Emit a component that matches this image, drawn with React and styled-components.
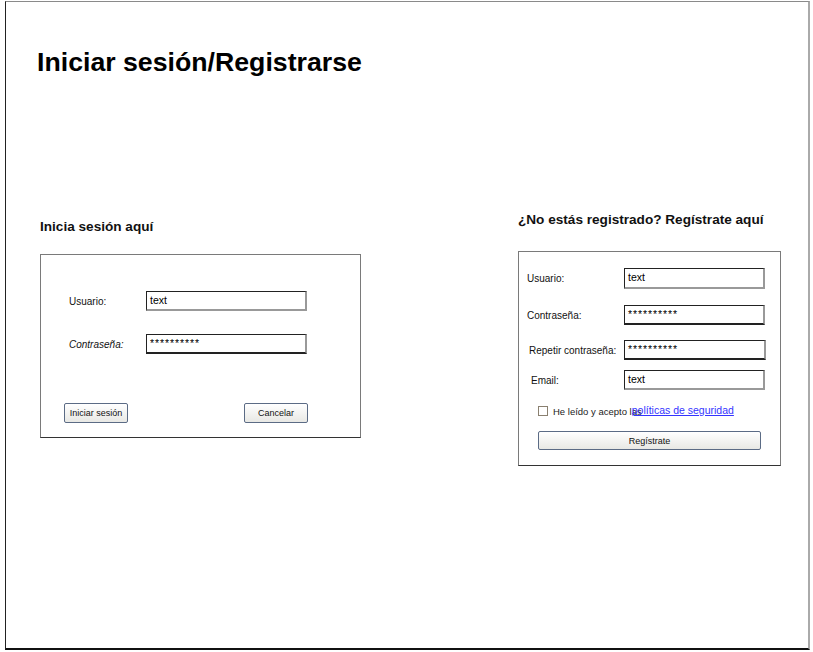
import React from "react";
import styled, { createGlobalStyle } from "styled-components";

const Global = createGlobalStyle`
  html, body { margin: 0; padding: 0; background: #fff; }
  body { font-family: "Liberation Sans", Arial, sans-serif; color: #111; }
`;

const Frame = styled.div`
  box-sizing: border-box;
  margin: 1px 0 0 5px;
  width: 805px;
  height: 649px;
  border-left: 1px solid #222;
  border-top: 1px solid #8a8a8a;
  border-right: 2px solid #aaa;
  border-bottom: 2px solid #111;
  padding: 45px 0 0 31px;
`;

const Title = styled.h1`
  margin: 0;
  font-size: 26.7px;
  line-height: 30px;
  font-weight: bold;
  color: #000;
`;

const Columns = styled.div`
  display: flex;
  align-items: flex-start;
  gap: 157px;
  margin-top: 135px;
  padding-left: 3px;
`;

const Column = styled.div`
  display: flex;
  flex-direction: column;
  margin-top: ${(p) => p.$top || 0}px;
`;

const Heading = styled.h2`
  margin: 0 0 ${(p) => p.$gap}px 0;
  font-size: 13.6px;
  line-height: 15px;
  font-weight: bold;
  color: #111;
  white-space: nowrap;
`;

const Panel = styled.div`
  box-sizing: border-box;
  width: ${(p) => p.$w}px;
  height: ${(p) => p.$h}px;
  border: 1px solid #7a7a7a;
  border-bottom-color: #333;
  padding: ${(p) => p.$pad};
  display: flex;
  flex-direction: column;
`;

const Row = styled.div`
  display: flex;
  align-items: center;
  margin-top: ${(p) => p.$mt || 0}px;
`;

const Label = styled.span`
  box-sizing: border-box;
  width: ${(p) => p.$w}px;
  padding-left: ${(p) => p.$indent || 0}px;
  font-size: 10px;
  color: #111;
  white-space: nowrap;
  ${(p) => (p.$italic ? "font-style: italic;" : "")}
`;

const Input = styled.div`
  box-sizing: border-box;
  width: ${(p) => p.$w}px;
  height: ${(p) => p.$h || 20}px;
  border-top: 1px solid #222;
  border-left: 1px solid #222;
  border-right: 2px solid #999;
  border-bottom: 2px solid ${(p) => (p.$dark ? "#222" : "#999")};
  padding: 0 3px;
  font-size: 10.5px;
  line-height: 17px;
  color: #000;
  background: #fff;
  letter-spacing: ${(p) => (p.$secret ? "0.9px" : "0")};
`;

const ButtonRow = styled.div`
  display: flex;
  justify-content: space-between;
  margin: ${(p) => p.$mt}px 0 0 ${(p) => p.$ml}px;
  width: ${(p) => p.$w}px;
`;

const Button = styled.button`
  box-sizing: border-box;
  width: ${(p) => p.$w}px;
  height: ${(p) => p.$h || 20}px;
  border: 1px solid #5b6b85;
  border-radius: 2px;
  background: linear-gradient(#ffffff, #e8e8e4);
  font-family: "Liberation Sans", Arial, sans-serif;
  font-size: 9px;
  color: #111;
  padding: 0;
  cursor: pointer;
`;

const CheckRow = styled.div`
  display: flex;
  align-items: center;
  margin: 15px 0 0 11px;
  white-space: nowrap;
`;

const Box = styled.span`
  box-sizing: border-box;
  width: 10px;
  height: 10px;
  border: 1px solid #8a8070;
  margin-right: 5px;
  background: #fff;
`;

const CheckText = styled.span`
  font-size: 9.5px;
  color: #222;
  margin-top: 1px;
`;

const Link = styled.a`
  font-size: 10.5px;
  color: #3434ff;
  text-decoration: underline;
  margin-left: -10px;
  margin-top: -2px;
`;

export default function App() {
  return (
    <>
      <Global />
      <Frame>
        <Title>Iniciar sesión/Registrarse</Title>
        <Columns>
          <Column $top={7}>
            <Heading $gap={20}>Inicia sesión aquí</Heading>
            <Panel $w={321} $h={184} $pad="36px 0 0 28px">
              <Row>
                <Label $w={77}>Usuario:</Label>
                <Input $w={161}>text</Input>
              </Row>
              <Row $mt={23}>
                <Label $w={77} $italic>Contraseña:</Label>
                <Input $w={161} $dark $secret>**********</Input>
              </Row>
              <ButtonRow $mt={49} $ml={-5} $w={244}>
                <Button $w={64}>Iniciar sesión</Button>
                <Button $w={64}>Cancelar</Button>
              </ButtonRow>
            </Panel>
          </Column>
          <Column>
            <Heading $gap={24}>¿No estás registrado? Regístrate aquí</Heading>
            <Panel $w={263} $h={215} $pad="16px 0 0 8px">
              <Row>
                <Label $w={97}>Usuario:</Label>
                <Input $w={141} $h={21}>text</Input>
              </Row>
              <Row $mt={16}>
                <Label $w={97}>Contraseña:</Label>
                <Input $w={141} $dark $secret>**********</Input>
              </Row>
              <Row $mt={15}>
                <Label $w={97} $indent={2}>Repetir contraseña:</Label>
                <Input $w={142} $dark $secret>**********</Input>
              </Row>
              <Row $mt={10}>
                <Label $w={97} $indent={4}>Email:</Label>
                <Input $w={141}>text</Input>
              </Row>
              <CheckRow>
                <Box />
                <CheckText>He leído y acepto las</CheckText>
                <Link href="#">políticas de seguridad</Link>
              </CheckRow>
              <ButtonRow $mt={14} $ml={11} $w={223}>
                <Button $w={223} $h={19}>Regístrate</Button>
              </ButtonRow>
            </Panel>
          </Column>
        </Columns>
      </Frame>
    </>
  );
}
